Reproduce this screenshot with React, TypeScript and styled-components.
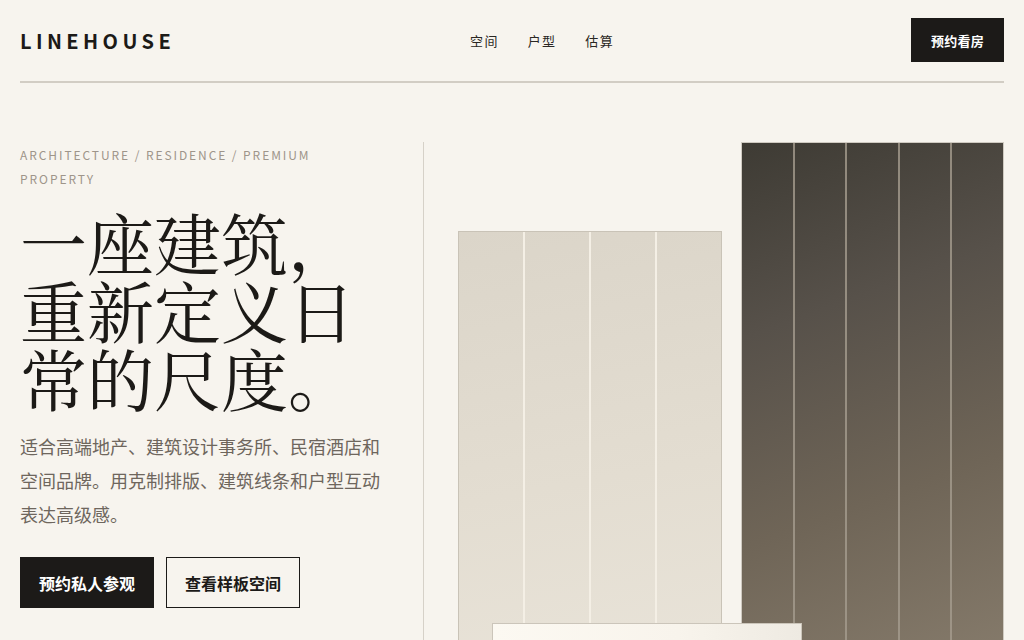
import React from "react";
import styled, { createGlobalStyle } from "styled-components";

const GlobalStyle = createGlobalStyle`
  * { box-sizing: border-box; }
  html, body {
    margin: 0;
    padding: 0;
    background: #f7f4ee;
    overflow: hidden;
  }
  body {
    font-family: "Noto Sans CJK SC", "Noto Sans", sans-serif;
    color: #1c1a17;
  }
`;

const Page = styled.div`
  height: 640px;
  display: flex;
  flex-direction: column;
  overflow: hidden;
`;

const Header = styled.header`
  flex-shrink: 0;
  margin: 0 20px;
  height: 83px;
  padding-bottom: 1px;
  display: flex;
  align-items: center;
  justify-content: space-between;
  border-bottom: 2px solid #d2cdc4;
`;

const Logo = styled.div`
  font-size: 20px;
  font-weight: 700;
  letter-spacing: 0.22em;
  color: #1c1a17;
`;

const Nav = styled.nav`
  display: flex;
  gap: 29px;
  margin-right: 2px;
`;

const NavLink = styled.a`
  font-size: 13px;
  letter-spacing: 0.1em;
  color: #2a2723;
  text-decoration: none;
`;

const HeaderButton = styled.button`
  height: 44px;
  padding: 0 20px;
  border: none;
  background: #1c1a18;
  color: #fff;
  font-family: inherit;
  font-size: 13px;
  font-weight: 700;
  letter-spacing: 0.02em;
`;

const Main = styled.main`
  flex: 1;
  display: flex;
  padding-top: 59px;
  margin-left: 20px;
`;

const Intro = styled.section`
  width: 404px;
  padding: 1px 40px 0 0;
  border-right: 1px solid #d6d1c8;
`;

const Eyebrow = styled.p`
  margin: 0;
  font-size: 12px;
  line-height: 24px;
  letter-spacing: 0.16em;
  color: #9e958a;
`;

const Title = styled.h1`
  margin: 16px 0 0;
  font-family: "Noto Serif CJK SC", "Source Han Serif SC", "Noto Serif", "Liberation Serif", serif;
  font-weight: 400;
  font-size: 67px;
  line-height: 68px;
  letter-spacing: 0;
  color: #1c1a17;
`;

const Lead = styled.p`
  margin: 18px 0 0;
  font-size: 18px;
  line-height: 34px;
  color: #6e665d;
`;

const Actions = styled.div`
  display: flex;
  gap: 12px;
  margin-top: 26px;
`;

const ActionButton = styled.button<{ $primary?: boolean }>`
  height: 51px;
  padding: 0 18px;
  font-family: inherit;
  font-size: 16px;
  font-weight: 700;
  border: 1px solid #1c1a18;
  background: ${(p) => (p.$primary ? "#1c1a18" : "transparent")};
  color: ${(p) => (p.$primary ? "#fff" : "#1c1a18")};
`;

const Art = styled.section`
  position: relative;
  flex: 1;
  display: flex;
  align-items: flex-start;
  gap: 19px;
  padding-left: 34px;
`;

const Panel = styled.div<{ $dark?: boolean; $offset: number; $width: number }>`
  width: ${(p) => p.$width}px;
  height: 560px;
  margin-top: ${(p) => p.$offset}px;
  display: flex;
  border: 1px solid ${(p) => (p.$dark ? "#cfcac1" : "#c9c3b7")};
  background: ${(p) =>
    p.$dark
      ? "linear-gradient(160deg, #3e3b34 0%, #57514a 30%, #6f6557 62%, #8a7f6f 100%)"
      : "linear-gradient(170deg, #dbd5c9 0%, #e3ddd1 45%, #ece7dd 100%)"};
`;

const Stripe = styled.div<{ $dark?: boolean; $first?: boolean }>`
  flex: 1;
  border-left: ${(p) =>
    p.$first
      ? "none"
      : p.$dark
      ? "2px solid rgba(165, 156, 142, 0.8)"
      : "2px solid #f4efe5"};
`;

const FloorCard = styled.div`
  position: absolute;
  left: 68px;
  top: 481px;
  width: 310px;
  height: 120px;
  border: 1px solid #cbc5ba;
  background: linear-gradient(90deg, #fcf9f2 0%, #f8f4ec 60%, #eeeae2 100%);
`;

const Stripes = ({ count, dark }: { count: number; dark?: boolean }) => (
  <>
    {Array.from({ length: count }, (_, i) => (
      <Stripe key={i} $dark={dark} $first={i === 0} />
    ))}
  </>
);

export default function App() {
  return (
    <Page>
      <GlobalStyle />
      <Header>
        <Logo>LINEHOUSE</Logo>
        <Nav>
          <NavLink>空间</NavLink>
          <NavLink>户型</NavLink>
          <NavLink>估算</NavLink>
        </Nav>
        <HeaderButton>预约看房</HeaderButton>
      </Header>
      <Main>
        <Intro>
          <Eyebrow>ARCHITECTURE / RESIDENCE / PREMIUM PROPERTY</Eyebrow>
          <Title>一座建筑，重新定义日常的尺度。</Title>
          <Lead>适合高端地产、建筑设计事务所、民宿酒店和空间品牌。用克制排版、建筑线条和户型互动表达高级感。</Lead>
          <Actions>
            <ActionButton $primary>预约私人参观</ActionButton>
            <ActionButton>查看样板空间</ActionButton>
          </Actions>
        </Intro>
        <Art>
          <Panel $offset={89} $width={264}>
            <Stripes count={4} />
          </Panel>
          <Panel $dark $offset={0} $width={263}>
            <Stripes count={5} dark />
          </Panel>
          <FloorCard />
        </Art>
      </Main>
    </Page>
  );
}
